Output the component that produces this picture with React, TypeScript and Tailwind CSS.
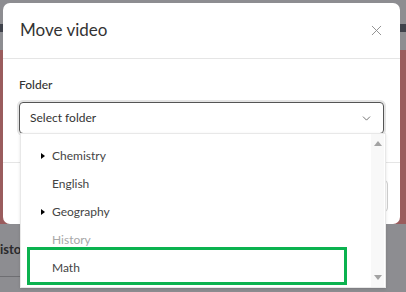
import { ChevronDown, X } from "lucide-react";

const FOLDERS = [
  { name: "Chemistry", caret: true },
  { name: "English" },
  { name: "Geography", caret: true },
  { name: "History", disabled: true },
  { name: "Math" },
];

export default function App() {
  return (
    <div className="relative h-[292px] w-[406px] overflow-hidden bg-[#8d8d91] font-['Lato',sans-serif]">
      {/* Dimmed page behind the modal */}
      <div className="flex h-full flex-col">
        <div className="h-[24px]" />
        <div className="h-[8px] bg-[#3f424b]" />
        <div className="h-[18px]" />
        <div className="h-[174px] bg-[#9a5c5d]" />
        <div className="flex h-[52px] items-center">
          <span className="text-[13px] font-bold text-[#2a2a2c]">isto</span>
        </div>
        <div className="h-[1px] w-[20px] bg-[#6e6e72]" />
      </div>

      {/* Modal */}
      <div className="absolute left-[3px] top-[3px] flex h-[221px] w-[397px] flex-col rounded-[7px] bg-white">
        <div className="flex h-[56px] items-center justify-between border-b border-[#e5e5e5] pl-[17px] pr-[15px]">
          <h2 className="-mt-[2px] text-[17px] text-[#333]">Move video</h2>
          <X className="h-[17px] w-[17px] text-[#8a8a8a]" strokeWidth={1.3} />
        </div>
        <div className="px-[16px] pt-[17px]">
          <label className="block text-[12px] font-medium text-[#333]">Folder</label>
          <div className="mt-[8px] flex h-[32px] items-center justify-between rounded-[4px] border border-[#555] px-[10px] shadow-[0_0_0_2px_#e4e4e4]">
            <span className="text-[12px] text-[#333]">Select folder</span>
            <ChevronDown className="h-[13px] w-[13px] text-[#555]" strokeWidth={1.5} />
          </div>
        </div>
        <div className="mt-[28px] border-t border-[#e5e5e5]" />
        <div className="flex justify-end pr-[12px] pt-[17px]">
          <div className="h-[32px] w-[80px] rounded-[4px] border border-[#cfcfcf]" />
        </div>
      </div>

      {/* Dropdown list */}
      <div className="absolute left-[20px] top-[133px] flex h-[155px] w-[366px] border border-[#e8e8e8] bg-white shadow-sm">
        <div className="flex-1 pl-[6px] pt-[8px]">
          {FOLDERS.map((f) => (
            <div
              key={f.name}
              className={`flex h-[28px] items-center pl-[14px] text-[12px] ${
                f.disabled ? "text-[#a8a8a8]" : "text-[#444]"
              }`}
            >
              <span className="mr-[8px] flex w-[3px] justify-center">
                {f.caret && (
                  <span className="h-0 w-0 border-y-[3px] border-l-[4px] border-y-transparent border-l-black" />
                )}
              </span>
              {f.name}
            </div>
          ))}
        </div>
        <div className="mr-[1px] flex w-[13px] flex-col items-center justify-between bg-[#f8f8f8] py-[7px]">
          <span className="h-0 w-0 border-x-[4px] border-b-[5px] border-x-transparent border-b-[#a3a3a3]" />
          <span className="h-0 w-0 border-x-[4px] border-t-[5px] border-x-transparent border-t-[#a3a3a3]" />
        </div>

        {/* Green highlight annotation */}
        <div className="absolute left-[6px] top-[113px] h-[38px] w-[320px] border-[3px] border-[#0bb24f]" />
      </div>
    </div>
  );
}
